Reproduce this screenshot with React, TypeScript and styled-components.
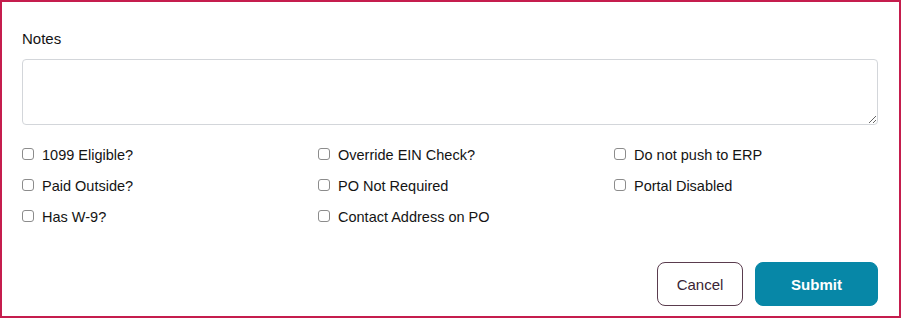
import React from "react";
import styled, { createGlobalStyle } from "styled-components";

const GlobalStyle = createGlobalStyle`
  body {
    margin: 0;
    background: #ffffff;
    font-family: "Liberation Sans", Arial, sans-serif;
  }
`;

const StyledFrame = styled.div`
  box-sizing: border-box;
  width: 901px;
  height: 318px;
  border: 2px solid #c51d4d;
  padding: 28px 21px 10px 20px;
  display: flex;
  flex-direction: column;
`;

const StyledLabel = styled.label`
  display: block;
  font-size: 15px;
  line-height: 17px;
  color: #141414;
  margin-bottom: 12px;
`;

const StyledNotes = styled.textarea`
  box-sizing: border-box;
  width: 100%;
  height: 66px;
  border: 1px solid #d3d6da;
  border-radius: 4px;
  resize: vertical;
  font-family: inherit;
  font-size: 14px;
  margin: 0 0 14px;
  outline: none;
`;

const StyledOptions = styled.div`
  display: grid;
  grid-template-columns: repeat(3, 296px);
  grid-auto-rows: 31px;
  align-items: center;
`;

const StyledOption = styled.label<{ $col: number }>`
  display: flex;
  align-items: center;
  gap: 8px;
  font-size: 14.5px;
  color: #141414;
  grid-column: ${(p) => p.$col};
`;

const StyledCheckbox = styled.input.attrs({ type: "checkbox" })`
  appearance: none;
  box-sizing: border-box;
  width: 12px;
  height: 12px;
  margin: 0 0 2px 0;
  border: 1px solid #8c8c8c;
  border-radius: 3px;
  background: #fff;
`;

const StyledActions = styled.div`
  margin-top: auto;
  display: flex;
  justify-content: flex-end;
  gap: 12px;
`;

const StyledButton = styled.button<{ $primary?: boolean }>`
  box-sizing: border-box;
  height: 44px;
  width: ${(p) => (p.$primary ? "123px" : "86px")};
  border-radius: 8px;
  font-family: inherit;
  font-size: 15px;
  font-weight: ${(p) => (p.$primary ? 700 : 400)};
  color: ${(p) => (p.$primary ? "#ffffff" : "#3a2434")};
  background: ${(p) => (p.$primary ? "#0787a7" : "#ffffff")};
  border: 1px solid ${(p) => (p.$primary ? "#0787a7" : "#5a3c4e")};
  cursor: pointer;
`;

const options: Array<[string, number]> = [
  ["1099 Eligible?", 1],
  ["Override EIN Check?", 2],
  ["Do not push to ERP", 3],
  ["Paid Outside?", 1],
  ["PO Not Required", 2],
  ["Portal Disabled", 3],
  ["Has W-9?", 1],
  ["Contact Address on PO", 2],
];

const App = () => {
  return (
    <>
      <GlobalStyle />
      <StyledFrame>
        <StyledLabel htmlFor="notes">Notes</StyledLabel>
        <StyledNotes id="notes" />
        <StyledOptions>
          {options.map(([text, col]) => (
            <StyledOption key={text} $col={col}>
              <StyledCheckbox />
              {text}
            </StyledOption>
          ))}
        </StyledOptions>
        <StyledActions>
          <StyledButton>Cancel</StyledButton>
          <StyledButton $primary>Submit</StyledButton>
        </StyledActions>
      </StyledFrame>
    </>
  );
};

export default App;
